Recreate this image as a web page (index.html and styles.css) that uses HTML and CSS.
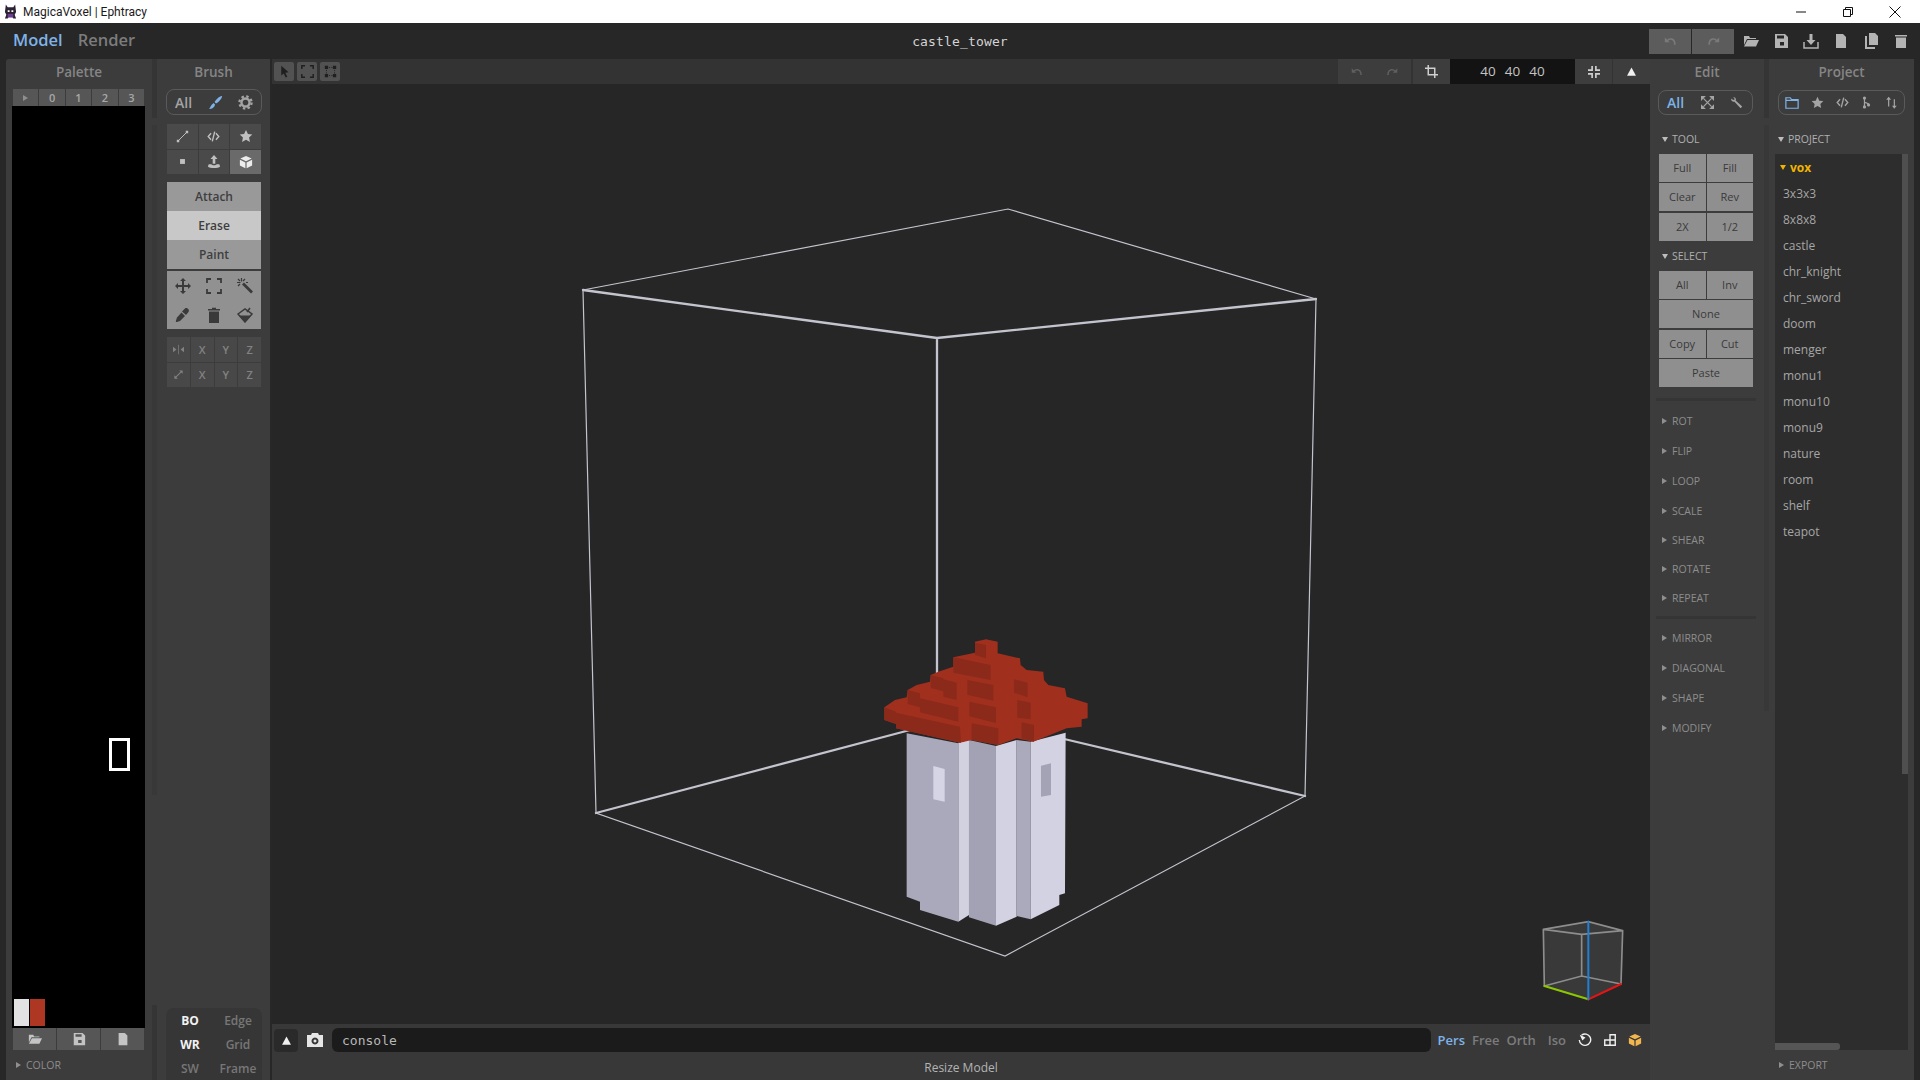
FILE: index.html
```html
<!DOCTYPE html>
<html lang="en">
<head>
<meta charset="utf-8">
<title>MagicaVoxel | Ephtracy</title>
<link rel="stylesheet" href="styles.css">
</head>
<body>
<svg class="defs" width="0" height="0" aria-hidden="true">
  <symbol id="i-arrow" viewBox="0 0 16 16"><path d="M4 1l9 8-4 .5 2.5 5-2 1-2.500-5L4 13z" fill="currentColor"/></symbol>
  <symbol id="i-frame" viewBox="0 0 16 16"><path d="M1 5V1h4M11 1h4v4M15 11v4h-4M5 15H1v-4" fill="none" stroke="currentColor" stroke-width="1.800"/></symbol>
  <symbol id="i-nodes" viewBox="0 0 16 16"><path d="M3 3h10M3 13h10M3 3v10M13 3v10" fill="none" stroke="currentColor" stroke-dasharray="1.500 1.500"/><path d="M1 1h4v4H1zM11 1h4v4h-4zM1 11h4v4H1zM11 11h4v4h-4z" fill="currentColor"/></symbol>
  <symbol id="i-undo" viewBox="0 0 16 16"><path d="M4 7a5 5 0 0 1 9 2l.500 3" fill="none" stroke="currentColor" stroke-width="2"/><path d="M1 3v6h6z" fill="currentColor"/></symbol>
  <symbol id="i-redo" viewBox="0 0 16 16"><path d="M12 7a5 5 0 0 0-9 2l-.500 3" fill="none" stroke="currentColor" stroke-width="2"/><path d="M15 3v6H9z" fill="currentColor"/></symbol>
  <symbol id="i-crop" viewBox="0 0 16 16"><path d="M4 0v12h12M0 4h12v12" fill="none" stroke="currentColor" stroke-width="1.800"/></symbol>
  <symbol id="i-fit" viewBox="0 0 16 16"><path d="M5.500 0v5.500H0M10.500 0v5.500H16M5.500 16v-5.500H0M10.500 16v-5.500H16" fill="none" stroke="currentColor" stroke-width="2.200"/></symbol>
  <symbol id="i-open" viewBox="0 0 16 16"><path d="M1 3h5l1 2h6v1H4L1 12z" fill="currentColor"/><path d="M4.500 7H16l-3 6.500H1z" fill="currentColor"/></symbol>
  <symbol id="i-save" viewBox="0 0 16 16"><path fill-rule="evenodd" d="M2 1h10l3 3v11H2zM4 2.500v3h7v-3zM7 9h4v3.500H7z" fill="currentColor"/></symbol>
  <symbol id="i-import" viewBox="0 0 16 16"><path d="M6.500 1h3v6h3L8 12 3.500 7h3z" fill="currentColor"/><path d="M1 9v6h14V9" fill="none" stroke="currentColor" stroke-width="1.500"/></symbol>
  <symbol id="i-file" viewBox="0 0 16 16"><path d="M3 1h7l3 3v11H3z" fill="currentColor"/></symbol>
  <symbol id="i-copy" viewBox="0 0 16 16"><path d="M6 0h6l3 3v9H6z" fill="currentColor"/><path d="M4 3v11h8v2H2V3z" fill="currentColor"/></symbol>
  <symbol id="i-trash" viewBox="0 0 16 16"><path d="M2 2h12v1.500H2zM3 4.500h10V15H3z" fill="currentColor"/></symbol>
  <symbol id="i-line" viewBox="0 0 16 16"><path d="M3 13L13 3" stroke="currentColor" stroke-width="1.200"/><path d="M1 12h3v3H1zM12 1h3v3h-3z" fill="currentColor"/></symbol>
  <symbol id="i-code" viewBox="0 0 16 16"><path d="M5 4L1.500 8 5 12M11 4l3.500 4-3.500 4M9.500 2l-3 12" fill="none" stroke="currentColor" stroke-width="1.700"/></symbol>
  <symbol id="i-star" viewBox="0 0 16 16"><path d="M8 1l2.200 4.700 5 .600-3.700 3.500 1 5L8 12.300 3.500 14.800l1-5L.800 6.300l5-.600z" fill="currentColor"/></symbol>
  <symbol id="i-dot" viewBox="0 0 16 16"><path d="M5 5h6v6H5z" fill="currentColor"/></symbol>
  <symbol id="i-extrude" viewBox="0 0 16 16"><path d="M8 0l4 4.500H9.500V10h-3V4.500H4z" fill="currentColor"/><path d="M5 10.500H2L1 13c2 2.500 12 2.500 14 0l-1-2.500h-3C10 12 6 12 5 10.500z" fill="currentColor"/></symbol>
  <symbol id="i-cube" viewBox="0 0 16 16"><path d="M8 1l6.500 3L8 7 1.500 4zM1 5.500l6.300 3V15L1 12zM15 5.500l-6.300 3V15l6.300-3z" fill="currentColor"/></symbol>
  <symbol id="i-move" viewBox="0 0 16 16"><path d="M8 0l3 3H9v4h4V5l3 3-3 3V9H9v4h2l-3 3-3-3h2V9H3v2L0 8l3-3v2h4V3H5z" fill="currentColor"/></symbol>
  <symbol id="i-wand" viewBox="0 0 16 16"><path d="M5 6.500L7 4.500 16 13.500 14 15.500z" fill="currentColor"/><path d="M4.500 0v3.500M0 4.500h3.500M1 1l2 2M8 1L6 3M1 8l2-2M9 4.500h2" stroke="currentColor" stroke-width="1.200" fill="none"/></symbol>
  <symbol id="i-dropper" viewBox="0 0 16 16"><path d="M10 1.500c2-1.500 5 1.500 3.500 3.500L11 8 7 4.500z" fill="currentColor"/><path d="M6.500 5.500l3.500 3.500-5 5-3 1H.800L1 13.500l1-3z" fill="currentColor"/></symbol>
  <symbol id="i-bin" viewBox="0 0 16 16"><path d="M2 2h4V.800h4V2h4v1.500H2zM3 4.500h10V16H3z" fill="currentColor"/></symbol>
  <symbol id="i-bucket" viewBox="0 0 16 16"><path d="M1 7l7-5 7 5-7 8z" fill="none" stroke="currentColor" stroke-width="1.500"/><path d="M2 8.500h12L8 15z" fill="currentColor"/><path d="M10 5l3-4" stroke="currentColor" stroke-width="1.500"/></symbol>
  <symbol id="i-mirror" viewBox="0 0 16 16"><path d="M0 4l5 4-5 4zM16 4l-5 4 5 4z" fill="currentColor"/><path d="M7.500 1h1v14h-1z" fill="currentColor"/></symbol>
  <symbol id="i-diag" viewBox="0 0 16 16"><path d="M3 13L13 3" stroke="currentColor" stroke-width="1.500"/><path d="M9 2h5v5zM2 9v5h5z" fill="currentColor"/></symbol>
  <symbol id="i-brush" viewBox="0 0 16 16"><path d="M15 1c.500 2-4 7-6.500 8L7 7.500C8 5 13 .500 15 1z" fill="currentColor"/><path d="M6 8.500L7.500 10C7 13 4 15 1 15c1.500-1 1.500-4 5-6.500z" fill="currentColor"/></symbol>
  <symbol id="i-gear" viewBox="0 0 16 16"><circle cx="8" cy="8" r="4.300" fill="none" stroke="currentColor" stroke-width="2.600"/><circle cx="8" cy="8" r="6.500" fill="none" stroke="currentColor" stroke-width="2.400" stroke-dasharray="2.600 2.500"/></symbol>
  <symbol id="i-expand" viewBox="0 0 16 16"><path d="M3 3l10 10M13 3L3 13" stroke="currentColor" stroke-width="1.500"/><path d="M0 0h6L0 6zM16 0h-6l6 6zM0 16h6l-6-6zM16 16h-6l6-6z" fill="currentColor"/></symbol>
  <symbol id="i-wrench" viewBox="0 0 16 16"><path d="M7 5.500L15 13 13 15 5.500 7C3.500 7.500 1 6 1.500 3l2.500 2L6 4 4 1.500C6.500 1 8 3.500 7 5.500z" fill="currentColor"/></symbol>
  <symbol id="i-folder" viewBox="0 0 16 16"><path d="M1 14V2h5l1.500 2H15v10zM1 5h14" fill="none" stroke="currentColor" stroke-width="1.400"/></symbol>
  <symbol id="i-branch" viewBox="0 0 16 16"><path d="M5.500 3v10M5.500 7c0 2 5 1 5 3.500" fill="none" stroke="currentColor" stroke-width="1.500"/><circle cx="5.500" cy="2.500" r="2" fill="currentColor"/><circle cx="5.500" cy="13.500" r="2" fill="currentColor"/><circle cx="10.500" cy="11" r="2" fill="currentColor"/></symbol>
  <symbol id="i-sort" viewBox="0 0 16 16"><path d="M4.500 13V2M11.500 4v11" stroke="currentColor" stroke-width="1.500"/><path d="M1.500 4.500L4.500 1l3 3.500zM8.500 12l3 3.500 3-3.500z" fill="currentColor"/></symbol>
  <symbol id="i-tri-up" viewBox="0 0 16 16"><path d="M8 2l6.500 12h-13z" fill="currentColor"/></symbol>
  <symbol id="i-camera" viewBox="0 0 18 16"><path fill-rule="evenodd" d="M1 3h4l1-2h6l1 2h4v12H1zM9 5.500a3.500 3.500 0 1 0 .001 0zM9 7.500a1.500 1.500 0 1 1-.001 0z" fill="currentColor"/></symbol>
  <symbol id="i-spin" viewBox="0 0 16 16"><path d="M4 2.500A6.500 6.500 0 1 1 1.500 8" fill="none" stroke="currentColor" stroke-width="1.600"/><path d="M2 2l6.500 3L5 8.500z" fill="currentColor"/></symbol>
  <symbol id="i-blocks" viewBox="0 0 16 16"><path d="M8 2h6v12H2V8h6zM8 8h6M8 8v6" fill="none" stroke="currentColor" stroke-width="1.600"/></symbol>
  <symbol id="i-logo" viewBox="0 0 14 16"><path d="M2 0l2 3h6l2-3 1 8-1.500 3L13 15H10L9 13H5l-1 2H1l1.500-4L1 8z" fill="#2b2233"/><path d="M4 6h2v2H4zM8 6h2v2H8z" fill="#fff"/><path d="M4 10h6v4H4z" fill="#6a3d8f"/></symbol>
</svg>

<div class="app">
  <header class="titlebar">
    <svg class="logo"><use href="#i-logo"/></svg>
    <span class="app-name">MagicaVoxel | Ephtracy</span>
    <div class="win-controls">
      <svg class="win-btn" viewBox="0 0 12 12"><path d="M1 6h10" stroke="#111" fill="none"/></svg>
      <svg class="win-btn" viewBox="0 0 12 12"><path d="M1.500 3.500h7v7h-7zM3.500 3.500v-2h7v7h-2" stroke="#111" fill="none"/></svg>
      <svg class="win-btn" viewBox="0 0 12 12"><path d="M.500 .500l11 11M11.500 .500l-11 11" stroke="#111" fill="none"/></svg>
    </div>
  </header>

  <nav class="menubar">
    <span class="tab tab-on">Model</span>
    <span class="tab">Render</span>
    <span class="doc-title">castle_tower</span>
    <div class="file-tools">
      <div class="hist">
        <span class="hist-btn"><svg class="ic13"><use href="#i-undo"/></svg></span>
        <span class="hist-btn"><svg class="ic13"><use href="#i-redo"/></svg></span>
      </div>
      <div class="file-icons">
        <svg class="ic16"><use href="#i-open"/></svg>
        <svg class="ic16"><use href="#i-save"/></svg>
        <svg class="ic16"><use href="#i-import"/></svg>
        <svg class="ic16"><use href="#i-file"/></svg>
        <svg class="ic16"><use href="#i-copy"/></svg>
        <svg class="ic16"><use href="#i-trash"/></svg>
      </div>
    </div>
  </nav>

  <main class="main">
    <section class="panel palette">
      <h2 class="panel-title">Palette</h2>
      <div class="pal-tabs">
        <span class="pal-tab"><i class="tri-r"></i></span>
        <span class="pal-tab">0</span><span class="pal-tab">1</span><span class="pal-tab">2</span><span class="pal-tab">3</span>
      </div>
      <div class="pal-field">
        <div class="pal-cursor"></div>
        <div class="swatches"><span class="sw sw-white"></span><span class="sw sw-red"></span></div>
      </div>
      <div class="pal-foot">
        <span class="pal-btn"><svg class="ic14"><use href="#i-open"/></svg></span>
        <span class="pal-btn"><svg class="ic14"><use href="#i-save"/></svg></span>
        <span class="pal-btn"><svg class="ic14"><use href="#i-file"/></svg></span>
      </div>
      <div class="fold foot-fold"><i class="tri-r"></i>COLOR</div>
    </section>

    <div class="gutter gutter-a"><i class="gut-top"></i><i class="gut-mid gut-mid-a"></i><i class="gut-end"></i></div>

    <section class="panel brush">
      <h2 class="panel-title">Brush</h2>
      <div class="pill">
        <span class="pill-text">All</span>
        <svg class="ic15 blue"><use href="#i-brush"/></svg>
        <svg class="ic15"><use href="#i-gear"/></svg>
      </div>
      <div class="icon-grid">
        <span class="cell"><svg class="ic13"><use href="#i-line"/></svg></span>
        <span class="cell"><svg class="ic13"><use href="#i-code"/></svg></span>
        <span class="cell"><svg class="ic14"><use href="#i-star"/></svg></span>
        <span class="cell"><svg class="ic13"><use href="#i-dot"/></svg></span>
        <span class="cell"><svg class="ic14"><use href="#i-extrude"/></svg></span>
        <span class="cell cell-on"><svg class="ic14"><use href="#i-cube"/></svg></span>
      </div>
      <div class="mode-stack">
        <button class="mode">Attach</button>
        <button class="mode mode-on">Erase</button>
        <button class="mode">Paint</button>
      </div>
      <div class="tool-grid">
        <svg class="ic16"><use href="#i-move"/></svg>
        <svg class="ic16"><use href="#i-frame"/></svg>
        <svg class="ic16"><use href="#i-wand"/></svg>
        <svg class="ic16"><use href="#i-dropper"/></svg>
        <svg class="ic16"><use href="#i-bin"/></svg>
        <svg class="ic16"><use href="#i-bucket"/></svg>
      </div>
      <div class="xyz-grid">
        <span class="xyz"><svg class="ic11"><use href="#i-mirror"/></svg></span><span class="xyz">X</span><span class="xyz">Y</span><span class="xyz">Z</span>
        <span class="xyz"><svg class="ic11"><use href="#i-diag"/></svg></span><span class="xyz">X</span><span class="xyz">Y</span><span class="xyz">Z</span>
      </div>
      <div class="render-flags">
        <b class="flag flag-on">BO</b><span class="flag">Edge</span>
        <b class="flag flag-on">WR</b><span class="flag">Grid</span>
        <span class="flag">SW</span><span class="flag">Frame</span>
      </div>
    </section>

    <section class="view">
      <div class="view-top">
        <div class="sel-tools">
          <span class="sel-btn"><svg class="ic13 dark"><use href="#i-arrow"/></svg></span>
          <span class="sel-btn"><svg class="ic13 dark"><use href="#i-frame"/></svg></span>
          <span class="sel-btn"><svg class="ic13 dark"><use href="#i-nodes"/></svg></span>
        </div>
        <div class="size-tools">
          <span class="vt-btn vt-hist"><svg class="ic12 dim"><use href="#i-undo"/></svg><svg class="ic12 dim"><use href="#i-redo"/></svg></span>
          <span class="vt-btn vt-sq"><svg class="ic13 bright"><use href="#i-crop"/></svg></span>
          <span class="size-field"><span>40</span><span>40</span><span>40</span></span>
          <span class="vt-btn vt-sq"><svg class="ic12 bright"><use href="#i-fit"/></svg></span>
          <span class="vt-btn vt-sq"><svg class="ic11 white"><use href="#i-tri-up"/></svg></span>
        </div>
      </div>

      <div class="stage">
        <svg class="scene" viewBox="272 84 1378 940">
          <g fill="none" stroke="#c4c4cf" stroke-linecap="round">
            <path stroke-width="1.200" d="M583 290L1008 209L1316 299M583 290L596 813L1005 956L1305 796L1316 299"/>
            <path stroke-width="2.300" d="M583 290L937 338L1316 299M937 338V690M596 813L910 730M1060 738L1305 796"/>
          </g>
          <g transform="translate(860 620) scale(.3333)">
            <path fill="#aaa9bc" d="M140 340L295 370V905L180 870V845L140 830z"/>
            <path fill="#d2d1e0" d="M295 368L327 360V885L295 905z"/>
            <path fill="#a3a2b4" d="M327 360L408 378V917L327 892z"/>
            <path fill="#d3d2e2" d="M408 378L470 360V890L408 917z"/>
            <path fill="#aba9bc" d="M470 360L512 365V898L470 888z"/>
            <path fill="#d3d2e2" d="M512 365L617 338L615 820L598 825V855L512 898z"/>
            <path fill="#d6d5e6" d="M220 438L254 447V545L220 538z"/>
            <path fill="#a4a3b5" d="M543 437L573 430V525L543 530z"/>
            <path fill="#a02f1e" d="M345 65L378 58L413 65V100L480 115L482 135L500 150L550 155L552 180L565 195L615 205L620 230L683 250V295L665 298V320L620 325L520 365L470 355L415 375L335 360L300 368L108 325V312L73 300V262L105 240L140 232L143 210L170 195L210 185L212 165L235 155L280 140V112L345 98z"/>
            <path fill="#8b2a1a" d="M345 68L378 75V115L345 105zM280 112L392 135V180L280 158zM212 165L250 175V214L212 204zM250 178L290 188V240L250 230zM322 180L400 195V242L322 224zM462 178L503 188V232L462 218zM143 210L180 220V262L143 252zM180 235L295 262V305L180 277zM328 245L408 262V309L328 289zM472 240L512 248V298L472 293zM73 262L108 275V312L73 300zM108 278L300 320L303 368L108 325zM335 310L415 325V375L335 360zM485 307L522 315V365L485 355z"/>
          </g>
          <g transform="translate(1520 900) scale(.3333)" fill="none" stroke-linecap="round">
            <path fill="#ffffff" fill-opacity=".09" d="M70 88L205 65L308 92L303 252L205 298L73 258z"/>
            <path stroke="#8d8d8d" stroke-width="5" d="M70 88L205 65L308 92M70 88L185 103L308 92M70 88L73 258M308 92L303 252M185 103V228M73 258L185 228L303 252"/>
            <path stroke="#8cc800" stroke-width="6" d="M73 258L205 298"/>
            <path stroke="#e81414" stroke-width="6" d="M205 298L303 252"/>
            <path stroke="#2080d8" stroke-width="6" d="M205 65V298"/>
          </g>
        </svg>
      </div>

      <div class="console-row">
        <span class="tri-btn"><svg class="ic11 white"><use href="#i-tri-up"/></svg></span>
        <svg class="cam"><use href="#i-camera"/></svg>
        <div class="console">console</div>
        <div class="proj-modes">
          <span class="pm pm-on">Pers</span><span class="pm">Free</span><span class="pm">Orth</span><span class="pm pm-iso">Iso</span>
        </div>
        <div class="view-icons">
          <svg class="ic14 white"><use href="#i-spin"/></svg>
          <svg class="ic14 white"><use href="#i-blocks"/></svg>
          <svg class="ic14 gold"><use href="#i-cube"/></svg>
        </div>
      </div>
      <div class="status">Resize Model</div>
    </section>

    <section class="panel edit">
      <h2 class="panel-title">Edit</h2>
      <div class="pill pill-edit">
        <span class="pill-text blue">All</span>
        <svg class="ic13"><use href="#i-expand"/></svg>
        <svg class="ic13"><use href="#i-wrench"/></svg>
      </div>
      <div class="sec-head sec-first"><i class="tri-d"></i>TOOL</div>
      <div class="btn-block">
        <div class="btn-row"><button class="tb">Full</button><button class="tb">Fill</button></div>
        <div class="btn-row"><button class="tb">Clear</button><button class="tb">Rev</button></div>
        <div class="btn-row btn-row-gap"><button class="tb">2X</button><button class="tb">1/2</button></div>
      </div>
      <div class="sec-head"><i class="tri-d"></i>SELECT</div>
      <div class="btn-block">
        <div class="btn-row"><button class="tb">All</button><button class="tb">Inv</button></div>
        <div class="btn-row"><button class="tb">None</button></div>
        <div class="btn-row btn-row-gap"><button class="tb">Copy</button><button class="tb">Cut</button></div>
        <div class="btn-row"><button class="tb">Paste</button></div>
      </div>
      <div class="divider div-a"></div>
      <div class="fold r30"><i class="tri-r"></i>ROT</div>
      <div class="fold r30"><i class="tri-r"></i>FLIP</div>
      <div class="fold r30"><i class="tri-r"></i>LOOP</div>
      <div class="fold r29"><i class="tri-r"></i>SCALE</div>
      <div class="fold r29"><i class="tri-r"></i>SHEAR</div>
      <div class="fold r29"><i class="tri-r"></i>ROTATE</div>
      <div class="fold r29"><i class="tri-r"></i>REPEAT</div>
      <div class="divider div-b"></div>
      <div class="fold r30"><i class="tri-r"></i>MIRROR</div>
      <div class="fold r30"><i class="tri-r"></i>DIAGONAL</div>
      <div class="fold r30"><i class="tri-r"></i>SHAPE</div>
      <div class="fold r30"><i class="tri-r"></i>MODIFY</div>
    </section>

    <div class="gutter gutter-b"><i class="gut-top"></i><i class="gut-mid gut-mid-b"></i></div>

    <section class="panel project">
      <h2 class="panel-title">Project</h2>
      <div class="pill pill-proj">
        <svg class="ic14 blue"><use href="#i-folder"/></svg>
        <svg class="ic13"><use href="#i-star"/></svg>
        <svg class="ic13"><use href="#i-code"/></svg>
        <svg class="ic13"><use href="#i-branch"/></svg>
        <svg class="ic13"><use href="#i-sort"/></svg>
      </div>
      <div class="sec-head sec-first sec-proj"><i class="tri-d"></i>PROJECT</div>
      <div class="file-list">
        <ul class="files">
          <li class="folder"><i class="tri-d tri-gold"></i>vox</li>
          <li>3x3x3</li><li>8x8x8</li><li>castle</li><li>chr_knight</li><li>chr_sword</li><li>doom</li><li>menger</li><li>monu1</li><li>monu10</li><li>monu9</li><li>nature</li><li>room</li><li>shelf</li><li>teapot</li>
        </ul>
        <div class="vbar"></div>
        <div class="hbar"></div>
      </div>
      <div class="fold foot-fold foot-export"><i class="tri-r"></i>EXPORT</div>
    </section>
  </main>
</div>
</body>
</html>
```

FILE: styles.css
```css
* { box-sizing: border-box; }
html, body { margin: 0; padding: 0; }
body { width: 1920px; height: 1080px; overflow: hidden; background: #272727; font-family: "Open Sans", "Noto Sans", sans-serif; font-size: 12px; color: #a8a8a8; }
.defs { position: absolute; }
svg { display: block; flex: none; }
i { display: block; flex: none; }
.ic11 { width: 11px; height: 11px; }
.ic12 { width: 12px; height: 12px; }
.ic13 { width: 13px; height: 13px; }
.ic14 { width: 14px; height: 14px; }
.ic15 { width: 15px; height: 15px; }
.ic16 { width: 16px; height: 16px; }
.blue { color: #7fb3e8; }
.gold { color: #f2b64e; }
.white { color: #f0f0f0; }
.bright { color: #d0d0d0; }
.dim { color: #5f5f5f; }
.dark { color: #1f1f1f; }

.app { width: 1920px; height: 1080px; display: flex; flex-direction: column; }

.titlebar { height: 23px; background: #fff; display: flex; align-items: center; color: #1a1a1a; padding-left: 4px; }
.logo { width: 13px; height: 16px; }
.app-name { margin-left: 6px; font-family: Roboto, sans-serif; font-size: 12px; }
.win-controls { margin-left: auto; display: flex; gap: 35px; margin-right: 19px; }
.win-btn { width: 12px; height: 12px; }

.menubar { height: 36px; display: flex; align-items: center; position: relative; padding-left: 13px; color: #8c8c8c; }
.tab { font-size: 16.500px; line-height: 20px; padding-bottom: 2px; font-weight: 600; margin-right: 15px; color: #7c7c7c; }
.tab-on { color: #7fb3e8; }
.doc-title { position: absolute; left: 0; right: 0; text-align: center; font-family: "DejaVu Sans Mono", monospace; font-size: 13px; letter-spacing: .15px; color: #d4d4d4; }
.file-tools { margin-left: auto; display: flex; align-items: center; margin-right: 11px; }
.hist { display: flex; gap: 1px; height: 25px; margin-right: 9px; position: relative; z-index: 1; }
.hist-btn { width: 42px; background: #5c5c5c; color: #7a7a7a; display: flex; align-items: center; justify-content: center; }
.file-icons { display: flex; gap: 14px; color: #b4b4b4; }

.main { flex: 1; display: flex; padding: 0 6px; min-height: 0; }
.panel { background: #3c3c3c; display: flex; flex-direction: column; position: relative; }
.panel-title { margin: 0; height: 30px; padding-bottom: 5px; display: flex; align-items: center; justify-content: center; font-size: 13.500px; font-weight: 600; color: #858585; }
.palette { width: 146px; border-top-left-radius: 3px; }
.gutter { width: 5px; background: #3c3c3c; display: flex; flex-direction: column; }
.gut-top { height: 59px; background: #353535; }
.gut-mid { margin-top: 7px; background: #383838; }
.gut-mid-a { height: 670px; }
.gut-mid-b { height: 586px; }
.gut-end { margin-top: auto; height: 75px; background: #353535; }

.pal-tabs { display: flex; gap: 1px; height: 17px; margin: 0 8px 0 7px; }
.pal-tab { flex: 1; background: #565656; display: flex; align-items: center; justify-content: center; font-size: 11px; font-weight: 600; color: #a8a8a8; }
.tri-r { width: 0; height: 0; border-left: 5px solid #8f8f8f; border-top: 3px solid transparent; border-bottom: 3px solid transparent; }
.pal-field { margin: 0 7px 0 6px; height: 922px; background: #000; position: relative; display: flex; align-items: flex-end; padding: 0 2px 2px; }
.pal-cursor { position: absolute; left: 97px; top: 632px; width: 21px; height: 33px; border: 3px solid #fff; }
.swatches { display: flex; gap: 1px; height: 27px; }
.sw { width: 15px; }
.sw-white { background: #e2e2e2; }
.sw-red { background: #ad3722; }
.pal-foot { display: flex; gap: 1px; height: 22px; margin: 0 8px 0 7px; }
.pal-btn { flex: 1; background: #565656; color: #c4c4c4; display: flex; align-items: center; justify-content: center; }
.fold { display: flex; align-items: center; gap: 5px; padding-left: 12px; font-size: 10.500px; font-weight: 500; color: #8d8d8d; }
.foot-fold { height: 30px; padding-left: 10px; }

.brush { width: 113px; }
.pill { height: 26px; margin: 0 8px 0 9px; border: 1px solid #5a5a5a; border-radius: 8px; display: flex; align-items: center; justify-content: space-between; padding: 0 8px 0 8px; color: #a4a4a4; }
.pill-text { font-size: 14px; font-weight: 600; color: #a4a4a4; }
.pill-text.blue { color: #7fb3e8; }
.icon-grid { margin: 9px 9px 0 10px; display: grid; grid-template-columns: repeat(3, 1fr); grid-auto-rows: 24.500px; gap: 1px; }
.cell { background: #4a4a4a; display: flex; align-items: center; justify-content: center; color: #c0c0c0; }
.cell-on { background: #6a6a6a; color: #ececec; }
.mode-stack { margin: 8px 9px 0 10px; display: flex; flex-direction: column; }
.mode { height: 29px; border: 0; padding: 0; background: #999; color: #3e3e3e; font: 600 12px "Open Sans", sans-serif; }
.mode-on { background: #c8c8c8; }
.tool-grid { margin: 2px 9px 0 10px; height: 58px; background: #919191; display: grid; grid-template-columns: repeat(3, 1fr); grid-template-rows: 1fr 1fr; place-items: center; color: #3a3a3a; }
.xyz-grid { margin: 8px 9px 0 10px; display: grid; grid-template-columns: repeat(4, 1fr); grid-auto-rows: 24.500px; gap: 1px; }
.xyz { background: #484848; display: flex; align-items: center; justify-content: center; font-size: 11px; font-weight: 600; color: #828282; }
.render-flags { margin: auto 8px 0 9px; height: 72px; background: #363636; border-radius: 8px 8px 0 0; display: grid; grid-template-columns: 1fr 1fr; grid-auto-rows: 24px; place-items: center; }
.flag { font-size: 12px; font-weight: 600; color: #777; }
.flag-on { color: #f2f2f2; font-weight: 700; }

.view { flex: 1; margin-left: 2px; display: flex; flex-direction: column; background: #262626; min-width: 0; }
.view-top { height: 25px; background: #333; display: flex; justify-content: space-between; }
.sel-tools { display: flex; gap: 3px; padding: 3px 0 3px 2px; }
.sel-btn { width: 20px; background: #525252; display: flex; align-items: center; justify-content: center; border-radius: 2px; }
.size-tools { display: flex; gap: 1px; }
.vt-btn { background: #3d3d3d; display: flex; align-items: center; justify-content: center; }
.vt-hist { width: 73px; gap: 23px; margin-right: 1px; }
.vt-sq { width: 37px; }
.size-field { width: 125px; margin: 0 -1px; background: #131313; display: flex; align-items: center; justify-content: center; gap: 9px; font-size: 13.500px; font-weight: 500; color: #c4c4c4; padding-bottom: 1px; }
.stage { flex: 1; position: relative; min-height: 0; }
.scene { position: absolute; left: 0; top: 0; width: 1378px; height: 940px; }
.console-row { height: 32px; background: #383838; display: flex; align-items: center; padding: 0 8px 0 2px; }
.tri-btn { width: 24px; height: 23px; background: #2a2a2a; border-radius: 4px; display: flex; align-items: center; justify-content: center; }
.cam { width: 18px; height: 16px; color: #e6e6e6; margin-left: 8px; }
.console { flex: 1; height: 24px; margin-left: 8px; background: #1b1b1b; border-radius: 6px; padding-left: 10px; display: flex; align-items: center; font-family: "DejaVu Sans Mono", monospace; font-size: 13px; color: #b8b8b8; }
.proj-modes { display: flex; flex: none; margin-left: 7px; gap: 7px; font-size: 13px; font-weight: 600; color: #7c7c7c; }
.pm-on { color: #7fb3e8; }
.pm-iso { margin-left: 5px; }
.view-icons { display: flex; flex: none; gap: 11px; margin-left: 12px; }
.status { height: 24px; padding-bottom: 2px; background: #383838; display: flex; align-items: center; justify-content: center; font-size: 12px; color: #b4b4b4; }

.edit { width: 114px; }
.pill-edit { margin: 1px 11px 0 8px; padding: 0 9px 0 8px; height: 25px; }
.sec-head { height: 30px; display: flex; align-items: center; gap: 4px; padding-left: 12px; font-size: 10.500px; font-weight: 500; color: #b0b0b0; }
.sec-first { margin-top: 9px; }
.tri-d { width: 0; height: 0; border-top: 5px solid #bdbdbd; border-left: 3px solid transparent; border-right: 3px solid transparent; }
.sec-proj { padding-left: 9px; }
.btn-block { margin: 0 11px 0 9px; display: flex; flex-direction: column; gap: 1px; }
.btn-row { display: flex; gap: 1px; height: 28px; }
.btn-row-gap { margin-top: 1px; }
.tb { flex: 1; border: 0; padding: 0 0 2px; background: #8f8f8f; color: #3a3a3a; font: 500 11px "Open Sans", sans-serif; }
.divider { height: 3px; margin: 0 8px 0 6px; background: #353535; }
.div-a { margin-top: 11px; margin-bottom: 5px; }
.div-b { margin-top: 4px; margin-bottom: 4px; }
.r30 { height: 30px; }
.r29 { height: 29px; }

.project { width: 145px; }
.pill-proj { margin: 1px 9px 0 9px; height: 25px; padding: 0 6px; }
.file-list { margin: 0 6px; height: 896px; background: #2d2d2d; position: relative; }
.files { list-style: none; margin: 0; padding: 1px 0 0 8px; font-size: 12px; font-weight: 500; color: #a6a6a6; }
.files li { height: 26px; padding-bottom: 2px; display: flex; align-items: center; }
.files .folder { color: #f0b400; font-weight: 700; margin-left: -3px; gap: 4px; }
.tri-gold { border-top-color: #f0b400; }
.vbar { position: absolute; right: 0; top: 0; width: 6px; height: 620px; background: #4f4f4f; }
.hbar { position: absolute; left: 0; bottom: 0; width: 65px; height: 7px; background: #555; border-radius: 0 3px 3px 0; }
```
